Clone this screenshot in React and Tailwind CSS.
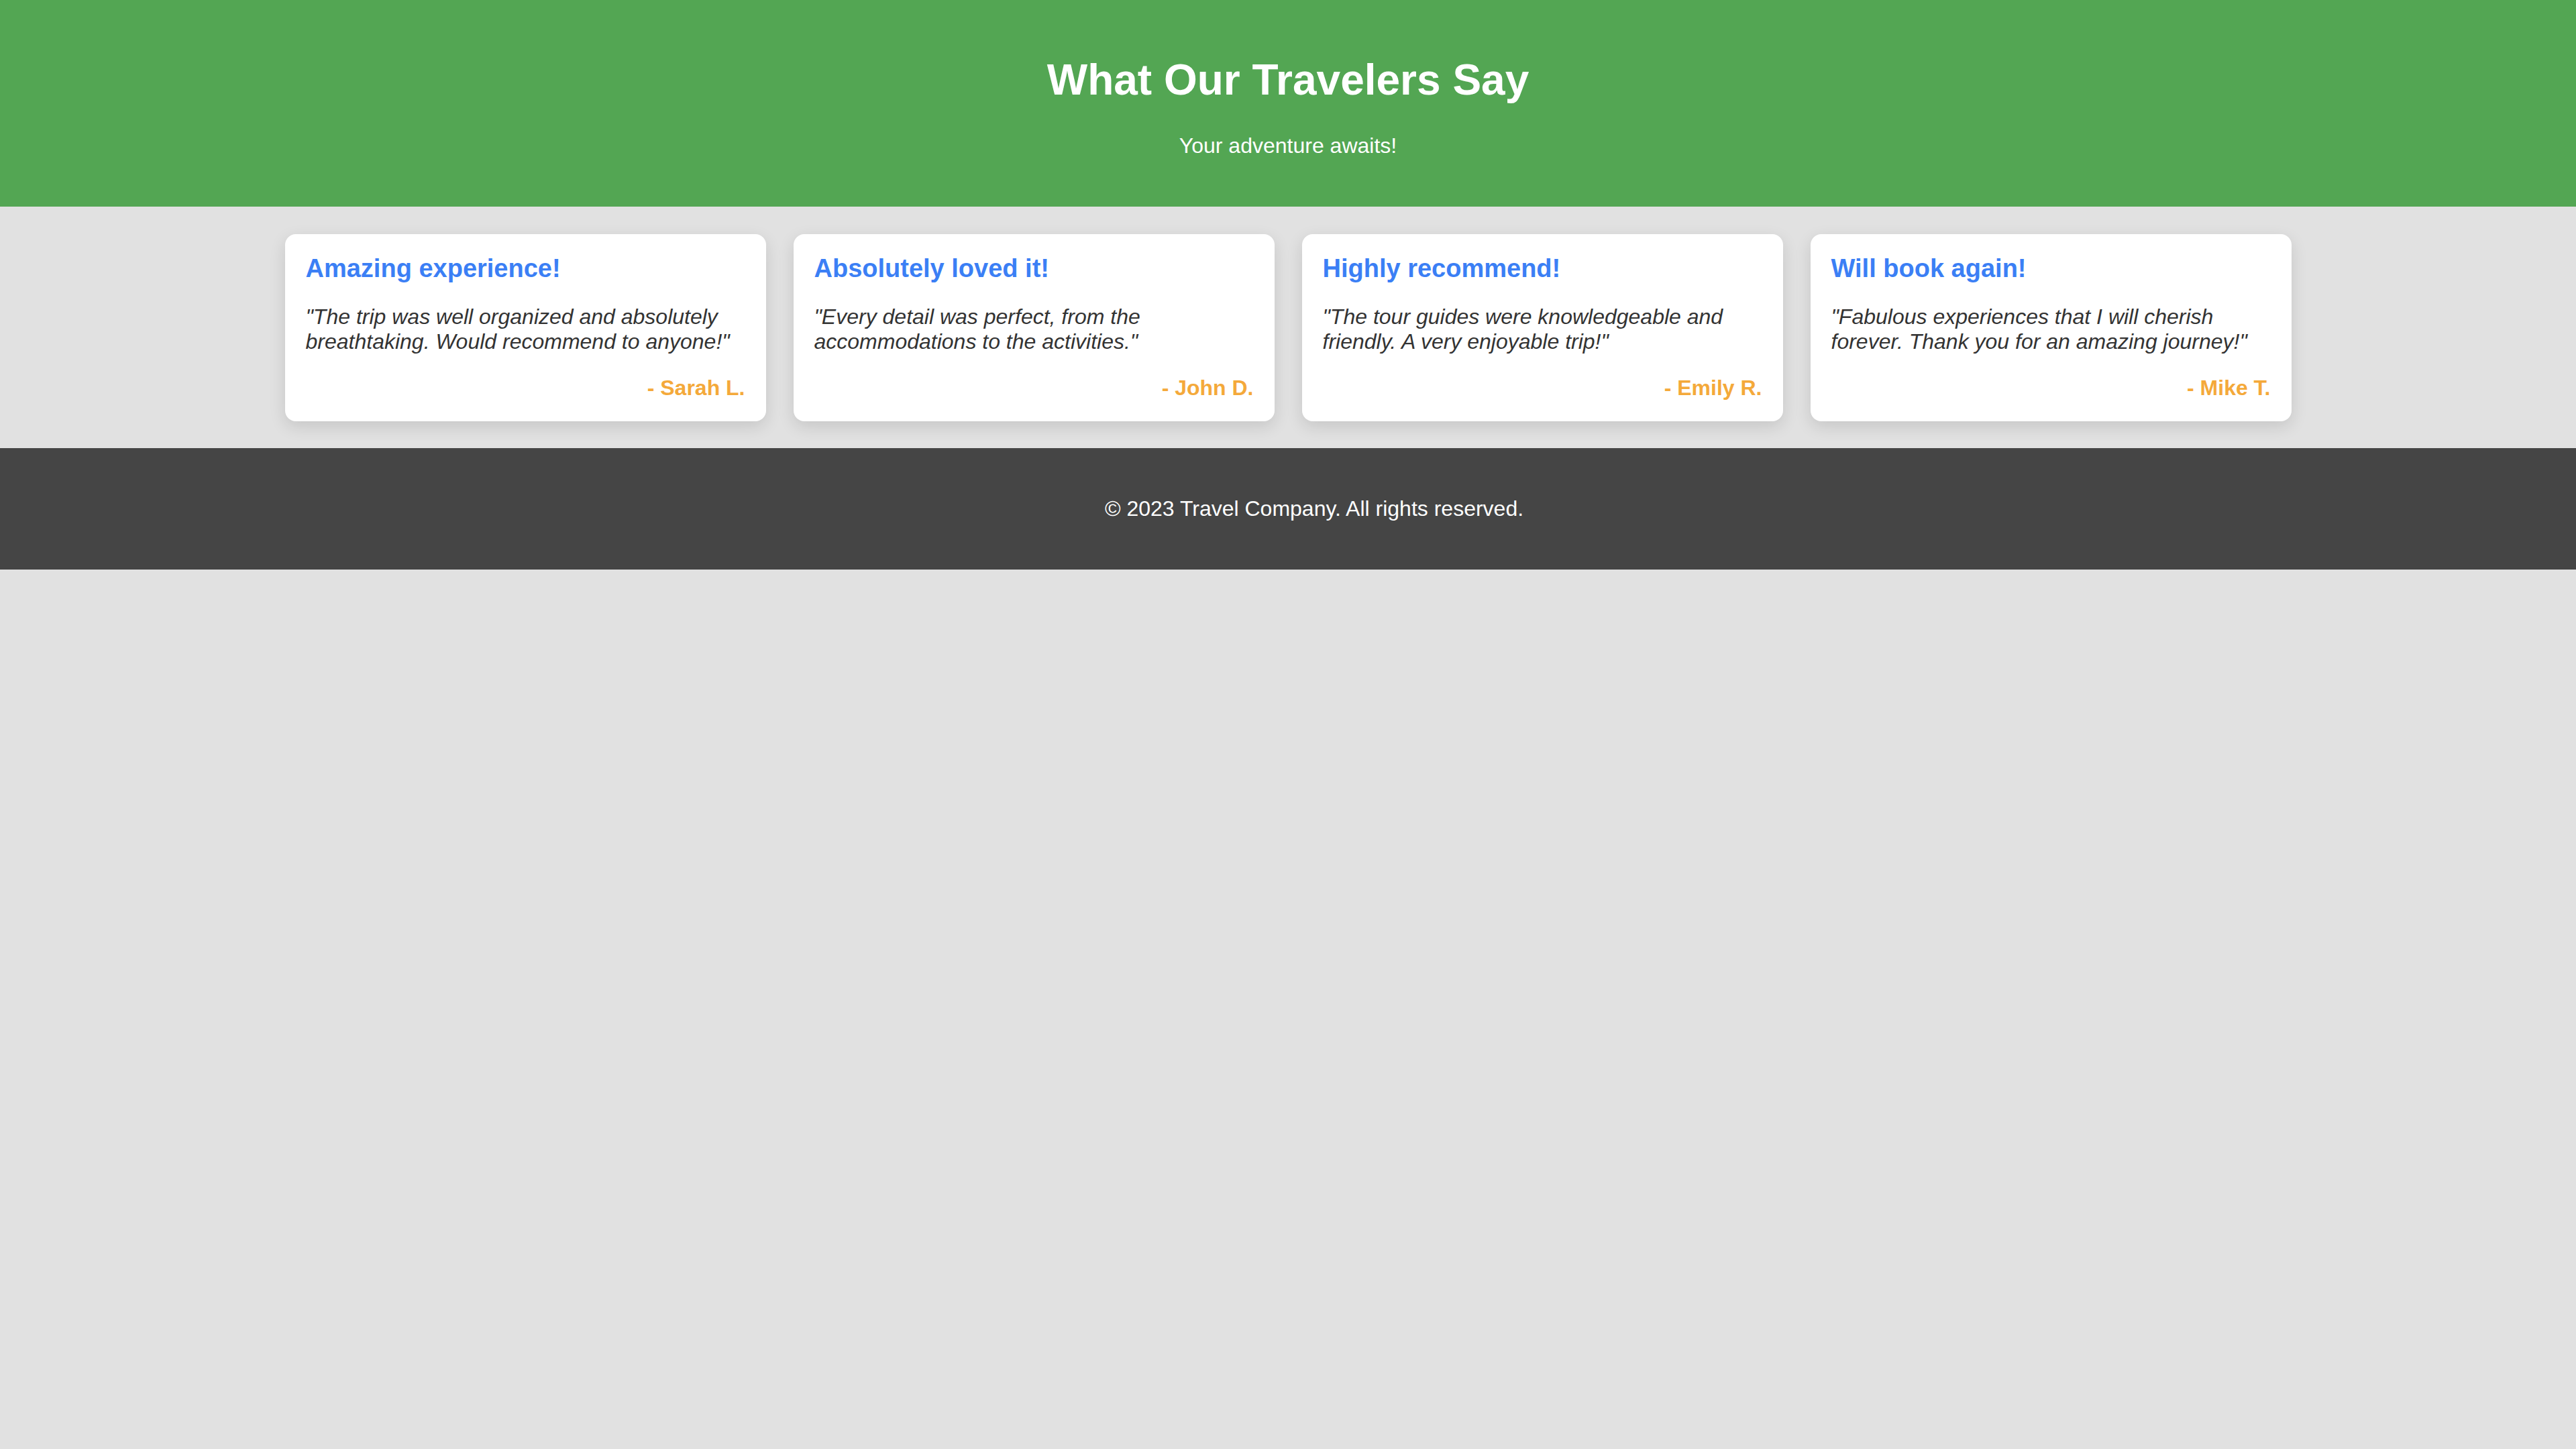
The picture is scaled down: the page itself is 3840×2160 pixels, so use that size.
export default function App() {
  const reviews = [
    {
      title: "Amazing experience!",
      text: '"The trip was well organized and absolutely breathtaking. Would recommend to anyone!"',
      author: "- Sarah L.",
    },
    {
      title: "Absolutely loved it!",
      text: '"Every detail was perfect, from the accommodations to the activities."',
      author: "- John D.",
    },
    {
      title: "Highly recommend!",
      text: '"The tour guides were knowledgeable and friendly. A very enjoyable trip!"',
      author: "- Emily R.",
    },
    {
      title: "Will book again!",
      text: '"Fabulous experiences that I will cherish forever. Thank you for an amazing journey!"',
      author: "- Mike T.",
    },
  ];

  return (
    <div className="min-h-screen bg-[#e1e1e1] font-['Liberation_Sans',Arial,sans-serif]">
      <header className="bg-[#53a653] text-white text-center pt-[83px] pb-[73px]">
        <h1 className="text-[64px] font-bold leading-[1.15]">What Our Travelers Say</h1>
        <p className="mt-[42px] text-[32px] leading-[1.15]">Your adventure awaits!</p>
      </header>

      <section className="flex justify-center gap-[41px] pt-[41px] pb-[40px]">
        {reviews.map((r) => (
          <div
            key={r.author}
            className="w-[717px] bg-white rounded-[16px] px-[31px] pt-[30px] pb-[32px] shadow-[0_8px_24px_rgba(0,0,0,0.12)]"
          >
            <h3 className="text-[38px] font-bold text-[#3b7ff5] leading-[1.15]">{r.title}</h3>
            <p className="mt-[31px] text-[32px] italic text-[#333333] leading-[1.15]">{r.text}</p>
            <p className="mt-[32px] text-[32px] font-bold text-right text-[#f4a93a] leading-[1.15]">
              {r.author}
            </p>
          </div>
        ))}
      </section>

      <footer className="bg-[#454545] text-white text-center py-[72px] pl-[78px]">
        <p className="text-[32px] leading-[1.15]">© 2023 Travel Company. All rights reserved.</p>
      </footer>
    </div>
  );
}
